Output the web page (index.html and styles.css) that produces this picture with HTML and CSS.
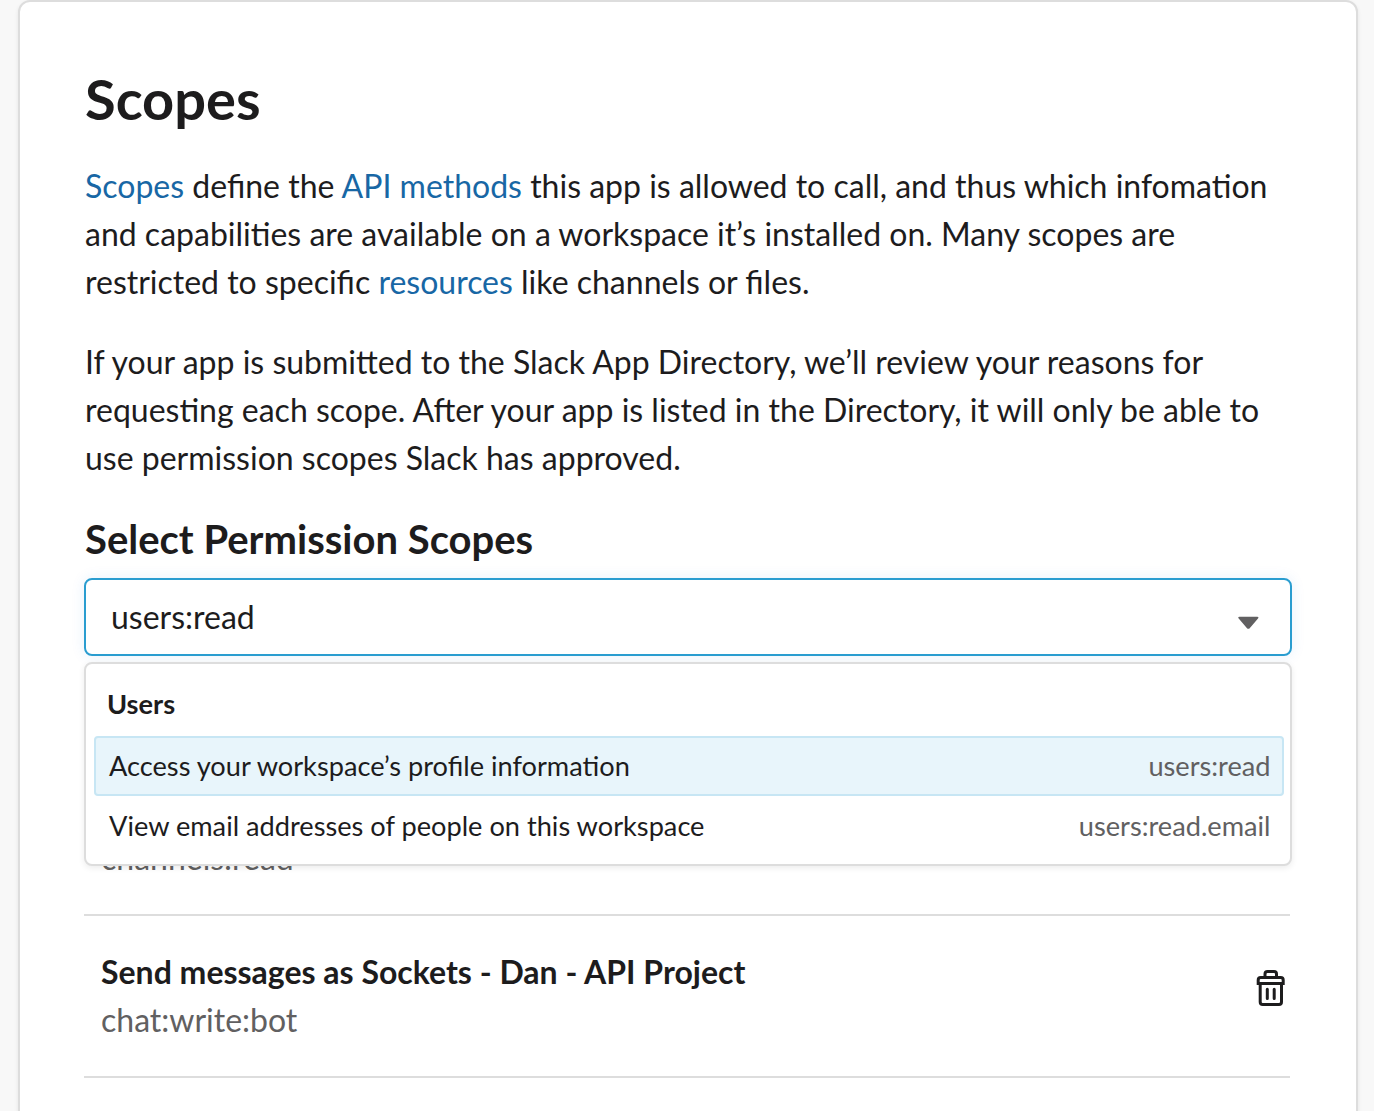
FILE: index.html
```html
<!DOCTYPE html>
<html lang="en">
<head>
<meta charset="utf-8">
<title>Scopes</title>
<link rel="stylesheet" href="styles.css">
</head>
<body>
<main class="card">
  <h1>Scopes</h1>
  <p><a href="#">Scopes</a> define the <a href="#">API methods</a> this app is allowed to call, and thus which infomation and capabilities are available on a workspace it’s installed on. Many scopes are restricted to specific <a href="#">resources</a> like channels or files.</p>
  <p>If your app is submitted to the Slack App Directory, we’ll review your reasons for requesting each scope. After your app is listed in the Directory, it will only be able to use permission scopes Slack has approved.</p>
  <h2>Select Permission Scopes</h2>
  <div class="picker">
    <div class="field"><span>users:read</span>
      <svg class="caret" width="22" height="14" viewBox="0 0 22 14"><path d="M2.500 1.800h17.700q2 0 .8 1.800l-8.100 9.300q-1.550 1.800-3.100 0L1.700 3.600Q.5 1.800 2.500 1.800z" fill="#616061"/></svg>
    </div>
    <div class="menu">
      <div class="group">Users</div>
      <div class="option active"><span>Access your workspace’s profile information</span><span class="code">users:read</span></div>
      <div class="option"><span>View email addresses of people on this workspace</span><span class="code">users:read.email</span></div>
    </div>
  </div>
  <ul class="scopes">
    <li><div><b>Access information about user’s public channels</b><span>channels:read</span></div></li>
    <li><div><b>Send messages as Sockets - Dan - API Project</b><span>chat:write:bot</span></div>
      <svg class="trash" width="30" height="38" viewBox="0 0 30 38" fill="none" stroke="#1d1c1d" stroke-width="3"><path d="M9 7V4Q9 1.500 11.500 1.500h6.500Q20.500 1.500 20.500 4V7M2.200 13.500V10Q2.200 7.500 4.700 7.500h20q2.500 0 2.500 2.500v3.500z"/><path d="M4.200 13.500V32q0 2.500 2.500 2.500h16.300q2.500 0 2.500-2.500V13.500"/><path stroke-linecap="round" d="M11.300 19.300v9.200M18.200 19.300v9.200"/></svg>
    </li>
  </ul>
</main>
</body>
</html>
```
FILE: styles.css
```css
* { box-sizing: border-box; }
body { margin: 0; height: 1111px; overflow: hidden; background: #f8f8f8; color: #1d1c1d; font: 32px/48px Lato, sans-serif; }
.card { width: 1340px; height: 1130px; margin: 0 0 0 18px; padding: 65px 65px 0; background: #fff; border: 2px solid #ddd; border-radius: 12px; box-shadow: 0 2px 4px rgba(0,0,0,.08); }
h1 { margin: 0 0 31px; font-size: 56px; line-height: 64px; font-weight: 700; }
p { margin: 0 0 32px; }
a { color: #1867a5; text-decoration: none; }
h2 { margin: 33px 0 15px; font-size: 40px; line-height: 48px; }
.picker { position: relative; width: 1208px; margin-left: -1px; }
.field { display: flex; align-items: center; justify-content: space-between; height: 78px; padding: 0 31px 0 25px; border: 2px solid #2a9dd0; border-radius: 8px; box-shadow: 0 0 14px rgba(29,120,230,.1); }
.caret { margin-top: 10px; }
.menu { position: absolute; z-index: 1; top: 84px; left: 0; width: 100%; height: 204px; padding: 16px 6px 0 8px; background: #fff; border: 2px solid #ddd; border-radius: 8px; box-shadow: 0 2px 6px rgba(0,0,0,.08); font-size: 27.2px; }
.group { height: 56px; padding-left: 13px; font-weight: 700; }
.option { display: flex; justify-content: space-between; height: 60px; padding: 0 11.500px 0 13px; line-height: 56px; border: 2px solid transparent; border-radius: 4px; }
.active { background: #e8f5fb; border-color: #c7e6f4; }
.code, .scopes span { color: #616061; }
.scopes { list-style: none; width: 1206px; margin: 98px 0 0 -1px; padding: 0; }
.scopes li { display: flex; justify-content: space-between; height: 162px; padding: 32px 4px 0 17px; border-bottom: 2px solid #ddd; }
.scopes b, .scopes span { display: block; }
.trash { margin-top: 22px; }
```
